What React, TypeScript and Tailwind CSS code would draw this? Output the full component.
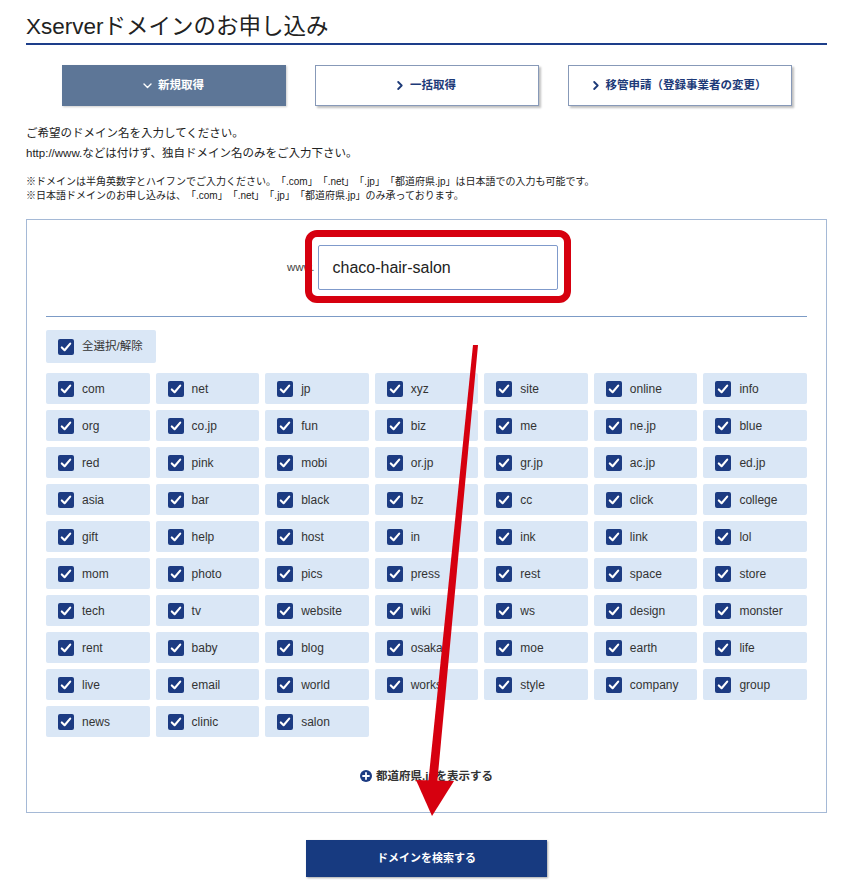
import React from "react";

const domains: string[] = [
  "com", "net", "jp", "xyz", "site", "online", "info",
  "org", "co.jp", "fun", "biz", "me", "ne.jp", "blue",
  "red", "pink", "mobi", "or.jp", "gr.jp", "ac.jp", "ed.jp",
  "asia", "bar", "black", "bz", "cc", "click", "college",
  "gift", "help", "host", "in", "ink", "link", "lol",
  "mom", "photo", "pics", "press", "rest", "space", "store",
  "tech", "tv", "website", "wiki", "ws", "design", "monster",
  "rent", "baby", "blog", "osaka", "moe", "earth", "life",
  "live", "email", "world", "works", "style", "company", "group",
  "news", "clinic", "salon",
];

const CheckBox: React.FC = () => (
  <span className="flex h-[16px] w-[16px] shrink-0 items-center justify-center rounded-[2px] bg-[#1c3b82]">
    <svg width="12" height="12" viewBox="0 0 12 12" fill="none">
      <path d="M1.8 6.4 L4.6 9.2 L10.2 2.6" stroke="#fff" strokeWidth="2.1" strokeLinecap="round" strokeLinejoin="round" />
    </svg>
  </span>
);

const ChevronDown = () => (
  <svg width="9" height="6" viewBox="0 0 9 6" fill="none">
    <path d="M1 1 L4.5 4.5 L8 1" stroke="currentColor" strokeWidth="1.4" strokeLinecap="round" strokeLinejoin="round" />
  </svg>
);

const ChevronRight = () => (
  <svg width="6" height="9" viewBox="0 0 6 9" fill="none">
    <path d="M1.2 1 L4.7 4.5 L1.2 8" stroke="currentColor" strokeWidth="1.8" strokeLinecap="round" strokeLinejoin="round" />
  </svg>
);

const App: React.FC = () => {
  return (
    <div className="relative h-[896px] w-[850px] overflow-hidden bg-white font-['Liberation_Sans','Noto_Sans_CJK_JP',sans-serif] text-[#222] [text-spacing-trim:space-all]">
      <div className="ml-[26px] w-[801px]">
        {/* heading */}
        <h1 className="border-b-[2px] border-[#1d3e8a] pb-[3px] pt-[14px] text-[22.5px] leading-[26px] text-[#222]">
          Xserverドメインのお申し込み
        </h1>

        {/* tabs */}
        <div className="mt-[20px] flex justify-center gap-[29px]">
          <div className="flex h-[41px] w-[224px] items-center justify-center gap-[6px] bg-[#5d7697] text-[11.5px] font-bold text-white shadow-[1px_1px_2px_rgba(0,0,0,0.2)]">
            <ChevronDown />
            新規取得
          </div>
          <div className="flex h-[41px] w-[224px] items-center justify-center gap-[7px] border border-[#8799b8] bg-white text-[11.5px] font-bold text-[#1d3a78] shadow-[2px_2px_2px_rgba(0,0,0,0.25)]">
            <ChevronRight />
            一括取得
          </div>
          <div className="flex h-[41px] w-[224px] items-center justify-center gap-[7px] border border-[#8799b8] bg-white text-[11.5px] font-bold text-[#1d3a78] shadow-[2px_2px_2px_rgba(0,0,0,0.25)]">
            <ChevronRight />
            移管申請（登録事業者の変更）
          </div>
        </div>

        {/* guidance */}
        <div className="mt-[17px] text-[11.5px] leading-[20px] text-[#222]">
          <p>ご希望のドメイン名を入力してください。</p>
          <p>http://www.などは付けず、独自ドメイン名のみをご入力下さい。</p>
        </div>
        <div className="mt-[12px] text-[10px] leading-[14px] text-[#222]">
          <p>※ドメインは半角英数字とハイフンでご入力ください。「.com」「.net」「.jp」「都道府県.jp」は日本語での入力も可能です。</p>
          <p>※日本語ドメインのお申し込みは、「.com」「.net」「.jp」「都道府県.jp」のみ承っております。</p>
        </div>

        {/* search form */}
        <div className="mt-[16px] border border-[#a5b9d6] px-[19px] pb-[28px] pt-[25px]">
          <div className="flex items-center pl-[241px]">
            <span className="text-[11.5px] text-[#444]">www.</span>
            <div className="ml-[4px] flex h-[45px] w-[240px] items-center rounded-[2px] border border-[#7f9acb] pl-[13px] text-[16px] text-[#222]">
              chaco-hair-salon
            </div>
          </div>

          <div className="mt-[26px] border-t border-[#7c9bc6]" />

          <div className="mt-[13px] flex h-[33px] w-[110px] items-center gap-[8px] rounded-[2px] bg-[#dae7f6] pl-[12px] text-[11.5px] text-[#333]">
            <CheckBox />
            全選択/解除
          </div>

          <div className="mt-[10px] grid grid-cols-7 gap-[6px]">
            {domains.map((d) => (
              <div key={d} className="flex h-[31px] items-center gap-[8px] rounded-[2px] bg-[#dae7f6] pl-[12px] text-[12px] text-[#333]">
                <CheckBox />
                {d}
              </div>
            ))}
          </div>

          <div className="mt-[31px] flex items-center justify-center gap-[4px] text-[11.5px] font-bold leading-[16px] text-[#333]">
            <svg width="12" height="12" viewBox="0 0 12 12">
              <circle cx="6" cy="6" r="6" fill="#1c3b82" />
              <path d="M6 3 V9 M3 6 H9" stroke="#fff" strokeWidth="1.8" strokeLinecap="round" />
            </svg>
            都道府県.jpを表示する
          </div>
        </div>

        <div className="mt-[27px] flex justify-center">
          <button className="h-[37px] w-[241px] bg-[#173a80] text-[11px] font-bold text-white shadow-[1px_1px_2px_rgba(0,0,0,0.35)]">
            ドメインを検索する
          </button>
        </div>
      </div>

      {/* annotation: highlight round the input */}
      <div className="pointer-events-none absolute left-[305px] top-[230px] h-[73px] w-[266px] rounded-[12px] border-[7px] border-[#d6000f]" />

      {/* annotation: arrow down to the search button */}
      <svg className="pointer-events-none absolute left-0 top-0" width="850" height="896" viewBox="0 0 850 896">
        <polygon points="473,345 478,345 437,785 428,785" fill="#d6000f" />
        <polygon points="416,780 454,781 432,816" fill="#d6000f" />
      </svg>
    </div>
  );
};

export default App;
